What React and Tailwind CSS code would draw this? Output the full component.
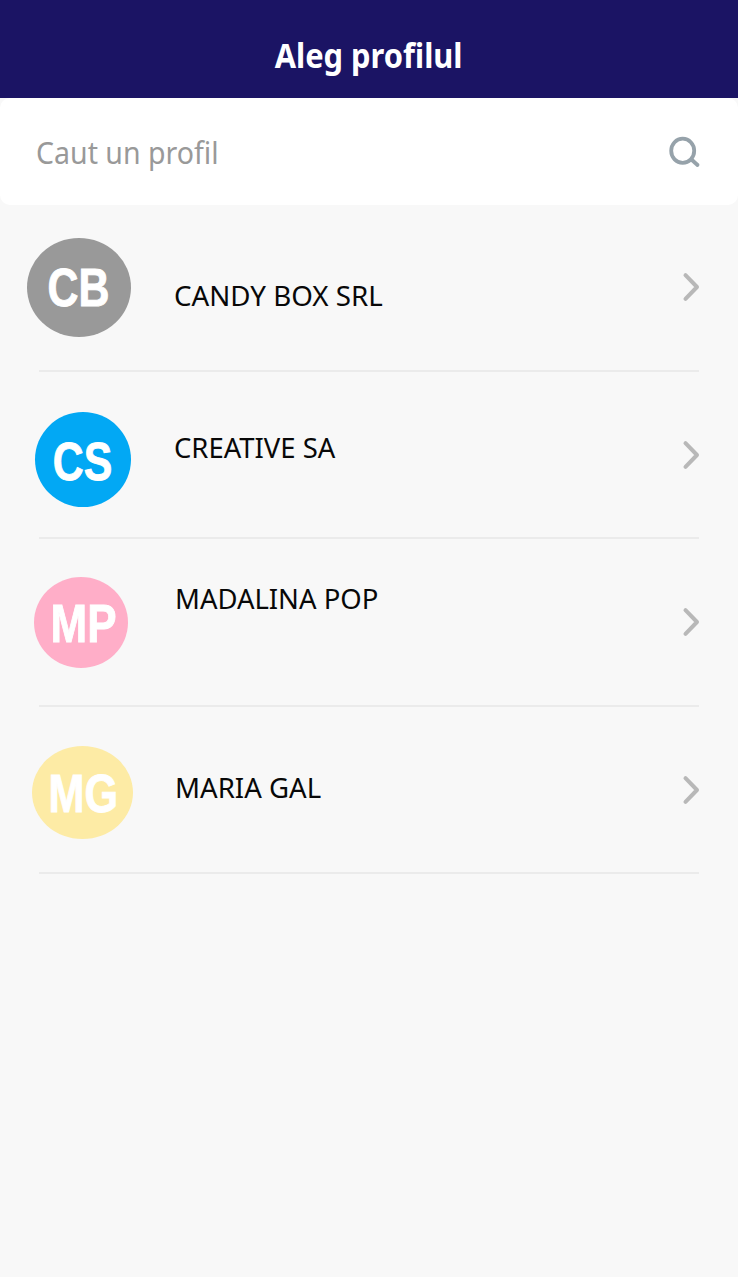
const profiles = [
  {
    initials: 'CB', name: 'CANDY BOX SRL', row: 'h-[168px]', avatar: 'ml-[27px] mt-[34px] w-[104px] h-[99px]', w: 104, h: 99,
    fill: '#999999', x: 20.6, y: 67.7, length: 62, label: 'ml-[43px] mt-[71px] scale-x-[0.99]',
  },
  {
    initials: 'CS', name: 'CREATIVE SA', row: 'h-[167px]', avatar: 'ml-[35px] mt-[40px] w-[96px] h-[95px]', w: 96, h: 95,
    fill: '#02a8f4', x: 17.8, y: 67.6, length: 59.5, label: 'ml-[43px] mt-[55px] scale-x-[0.98]',
  },
  {
    initials: 'MP', name: 'MADALINA POP', row: 'h-[168px]', avatar: 'ml-[34px] mt-[38px] w-[94px] h-[91px]', w: 94, h: 91,
    fill: '#ffaec8', x: 16.5, y: 64.7, length: 66, label: 'ml-[47px] mt-[39px] scale-x-[0.98]',
  },
  {
    initials: 'MG', name: 'MARIA GAL', row: 'h-[167px]', avatar: 'ml-[32px] mt-[39px] w-[101px] h-[93px]', w: 101, h: 93,
    fill: '#fdeba5', x: 16.5, y: 66, length: 69.5, label: 'ml-[42px] mt-[60px] scale-x-[0.985]',
  },
];

function Avatar({ profile }) {
  const { w, h } = profile;
  return (
    <svg className={`block shrink-0 overflow-visible ${profile.avatar}`} viewBox={`0 0 ${w} ${h}`}>
      <ellipse cx={w / 2} cy={h / 2} rx={w / 2} ry={h / 2} fill={profile.fill} />
      <text
        x={profile.x}
        y={profile.y}
        textLength={profile.length}
        lengthAdjust="spacingAndGlyphs"
        fill="#fff"
        stroke="#fff"
        strokeWidth="0.9"
        className="font-['Liberation_Sans',sans-serif] text-[53px] leading-none font-bold"
      >
        {profile.initials}
      </text>
    </svg>
  );
}

function ProfileRow({ profile }) {
  return (
    <li className={`flex flex-col ${profile.row}`}>
      <div className="flex min-h-0 flex-1 items-start">
        <Avatar profile={profile} />
        <span className={`origin-left whitespace-nowrap text-[28px] leading-10 text-[#080808] ${profile.label}`}>
          {profile.name}
        </span>
        <svg className="mr-[37px] ml-auto h-8 w-5 self-center" viewBox="0 0 20 32" fill="none" stroke="#b8b8b8" strokeWidth="4" strokeLinecap="round" strokeLinejoin="round">
          <path d="M4.5 4.2 L16 16 L4.5 27.8" />
        </svg>
      </div>
      <div className="mx-[39px] h-0.5 shrink-0 bg-[#ebebeb]" />
    </li>
  );
}

export default function App() {
  return (
    <main className="min-h-[1277px] bg-[#f8f8f8] font-['Noto_Sans',sans-serif]">
      <header className="flex h-[98px] items-center justify-center bg-[#1b1464] pt-[12px]">
        <h1 className="scale-x-[0.907] whitespace-nowrap text-[34px] leading-none font-bold text-white">Aleg profilul</h1>
      </header>
      <div className="flex h-[107px] items-center justify-between rounded-[10px] bg-white pt-px pr-[37px] pl-[36px]">
        <span className="origin-left scale-x-[0.92] pt-px whitespace-nowrap text-[31px] leading-none text-[#999]">Caut un profil</span>
        <svg className="h-8 w-8" viewBox="0 0 32 32" fill="none" stroke="#96a2aa" strokeWidth="3.8" strokeLinecap="round">
          <ellipse cx="13.7" cy="14.8" rx="11.5" ry="12.1" />
          <path d="M23 24 L28.5 29" />
        </svg>
      </div>
      <ul className="-mt-px">
        {profiles.map((profile) => (
          <ProfileRow key={profile.initials} profile={profile} />
        ))}
      </ul>
    </main>
  );
}
